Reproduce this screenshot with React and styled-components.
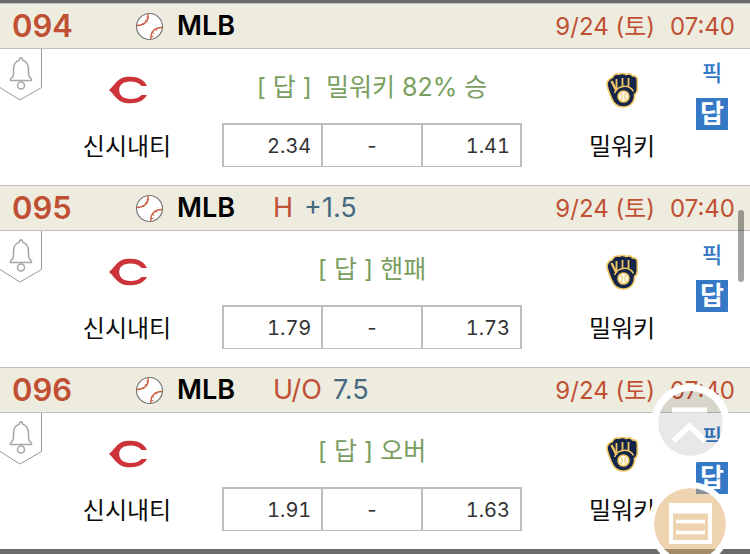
import React from "react";
import styled, { createGlobalStyle } from "styled-components";

const Global = createGlobalStyle`
  *, *::before, *::after { box-sizing: border-box; }
  body {
    margin: 0;
    background: #fff;
    color: #0c0c0c;
    font-family: Inter, "Noto Sans CJK KR", sans-serif;
  }
`;

const List = styled.main`
  border-top: 3px solid #6b6b6b;
  border-bottom: 5px solid #6b6b6b;
`;

const Game = styled.article`
  display: flex;
  flex-direction: column;
`;

const GameHeader = styled.header`
  display: flex;
  align-items: center;
  height: 46px;
  padding: 0 15px 0 12px;
  background: #eeecdf;
  border-top: 1px solid #bebebe;
  border-bottom: 1px solid #bebebe;
  white-space: nowrap;
`;

const GameNumber = styled.span`
  width: 123px;
  font-size: 31px;
  line-height: 44px;
  font-weight: 600;
  color: #c05033;
`;

const League = styled.h2`
  display: flex;
  align-items: center;
  gap: 13px;
  margin: 0;
  font-size: 27px;
  line-height: 46px;
  font-weight: 600;
  color: #000;
`;

const Line = styled.span`
  display: flex;
  gap: 11px;
  margin-left: 38px;
  font-size: 27px;
  line-height: 46px;
  color: #c05033;
`;

const LineValue = styled.span`
  color: #45697f;
`;

const Kickoff = styled.time`
  display: flex;
  gap: 15px;
  margin-left: auto;
  font-size: 24px;
  line-height: 46px;
  padding-top: 2px;
  color: #c05033;
`;

const GameBody = styled.div`
  display: grid;
  grid-template-columns: 42px 170fr 336px 148fr 54px;
  height: 136px;
`;

const AlarmButton = styled.button`
  align-self: start;
  width: 42px;
  height: 52px;
  padding: 0;
  border: 0;
  background: none;

  svg { display: block; }
`;

const Team = styled.div`
  display: flex;
  flex-direction: column;
  align-items: center;
  gap: 20px;
  padding-top: 22px;
  font-size: 24px;
  line-height: 36px;
  white-space: nowrap;
`;

const Middle = styled.div`
  display: flex;
  flex-direction: column;
  gap: 18px;
  padding: 20px 26px 0 10px;
`;

const Answer = styled.p`
  margin: 0;
  font-size: 25px;
  line-height: 36px;
  text-align: center;
  white-space: pre;
  color: #7a9e60;
`;

const Odds = styled.table`
  width: 100%;
  height: 44px;
  table-layout: fixed;
  border-collapse: collapse;
  border: 2px solid #bdbdbd;
  border-bottom-width: 1px;
`;

const Odd = styled.td`
  padding: 0 10px;
  border-left: 2px solid #bdbdbd;
  font-size: 20px;
  line-height: 24px;
  font-variant-numeric: tabular-nums;
  text-align: ${(p) => (p.$center ? "center" : "right")};
  color: #333;
`;

const Picks = styled.div`
  display: flex;
  flex-direction: column;
  align-items: flex-start;
  gap: 9px;
  padding-top: 8px;
`;

const PickButton = styled.button`
  width: 32px;
  height: 32px;
  padding: 0;
  border: 0;
  font-family: inherit;
  font-size: ${(p) => (p.$filled ? "26px" : "22px")};
  line-height: 32px;
  font-weight: ${(p) => (p.$filled ? 700 : 500)};
  color: ${(p) => (p.$filled ? "#fff" : "#3478c6")};
  background: ${(p) => (p.$filled ? "#3478c6" : "none")};
`;

const FloatingActions = styled.nav`
  position: fixed;
  right: 18px;
  bottom: -12px;
  display: flex;
  flex-direction: column;
  align-items: center;
  gap: 19px;
`;

const RoundButton = styled.button`
  display: grid;
  place-items: center;
  width: ${(p) => p.$size}px;
  height: ${(p) => p.$size}px;
  padding: 0;
  border: ${(p) => p.$ring}px solid #fff;
  border-radius: 50%;
  background: ${(p) => p.$fill};
  background-clip: padding-box;
`;

const ScrollThumb = styled.div`
  position: fixed;
  top: 210px;
  right: 6px;
  width: 6px;
  height: 72px;
  border-radius: 3px;
  background: rgba(0, 0, 0, 0.36);
`;

const Baseball = () => (
  <svg width="29" height="29" viewBox="0 0 29 29" fill="none" aria-hidden="true">
    <circle cx="14.5" cy="14.5" r="13" fill="#fff" stroke="#777" strokeWidth="1.2" />
    <g stroke="#cb5a3c" strokeWidth="1.4">
      <path d="M13 2c1 6-3 11.500-11.200 11.500" />
      <path d="M16 27c-.8-6 3-11.500 11.200-11.500" />
      <path d="M11.500 5l2.500 .8M10 8.500l2.500 1.500M7.500 11l1.500 2M16 24l2.500 .8M17 20l2.200 1.500M20.500 16.500l1.500 2.200" strokeWidth="1" />
    </g>
  </svg>
);

const Bell = () => (
  <svg width="42" height="52" viewBox="0 0 42 52" fill="none" aria-hidden="true">
    <path d="M41.500 0V38.500L20 51L0 38.500" stroke="#999" />
    <path
      d="M21 8.800c-1 0-1.500 1.200-1.500 2.300c-4.300 1.300-6 5-6 9.400v4.500c0 2-1 3.500-3 5v1.500h21V30c-2-1.500-3-3-3-5v-4.500c0-4.400-1.700-8.100-6-9.400c0-1.100-.5-2.300-1.500-2.300z"
      stroke="#a6a6a6"
      strokeWidth="1.500"
      strokeLinejoin="round"
    />
    <circle cx="21" cy="36.500" r="3.500" stroke="#a6a6a6" strokeWidth="1.500" />
  </svg>
);

const RedsLogo = () => (
  <svg width="40" height="38" viewBox="0 0 40 38" aria-hidden="true">
    <path
      d="M2 19C6 15.500 9 10.500 13 8C16.500 5.800 20 5.800 24 5.800C31 5.800 37 8.500 40 15H34.500C31.500 11.500 28 10.500 23.500 10.500C16 10.500 12.200 14 12.200 19S16 28 23.500 28C28 28 31.500 27 34.500 24H40C37 29.500 31 32.200 24 32.200C20 32.200 16.500 32.200 13 30C9 27.500 6 22.500 2 19Z"
      fill="#cd3439"
    />
  </svg>
);

const BrewersLogo = () => (
  <svg width="40" height="38" viewBox="0 0 40 38" aria-hidden="true">
    <path
      d="M5 12.500C5.500 9.500 8 7.500 10.500 6.500C11.500 4 14 2.500 17 3.200C19.500 2.200 22 2.200 24 3.500C27 2.500 29.500 3 30.500 5C33.500 4.500 35.500 6.500 35.300 9.500V18C35.200 20.500 34.500 22.500 32.500 23.500C33 31 28 36 21.500 36C15 36 11.500 32 9.800 27.500C8 23 5 17 5 12.500Z"
      fill="#152548"
      stroke="#f0c663"
      strokeWidth="1.600"
    />
    <g fill="none" stroke="#f0c663">
      <path d="M9.500 10C11 13 13 17 14.500 20" strokeWidth="2.400" />
      <path d="M14.500 8V18M20.500 7V15M26.500 7V15.500" strokeWidth="1.800" />
      <path d="M12.500 22C15 14.500 27 12.500 31.500 20.500" strokeWidth="1.500" />
    </g>
    <circle cx="21.500" cy="25.500" r="5.500" fill="#fffbea" stroke="#f0c663" strokeWidth="1.600" />
    <path d="M19 22C20.500 24 20.500 27 19 29M24 22C22.500 24 22.500 27 24 29" fill="none" stroke="#e8bd5a" />
  </svg>
);

const ToTopIcon = () => (
  <svg width="40" height="40" viewBox="0 0 40 40" fill="none" stroke="#fff" aria-hidden="true">
    <path d="M2 6H37" strokeWidth="5" />
    <path d="M3.500 37L19.500 22L35.500 37" strokeWidth="5.500" />
  </svg>
);

const ListIcon = () => (
  <svg width="44" height="42" viewBox="0 0 44 42" fill="none" stroke="#fff" aria-hidden="true">
    <path d="M3 2H42V39H3Z" strokeWidth="4" />
    <path d="M3 6.500H42" strokeWidth="8" />
    <path d="M8 18.500H37M8 29.500H37" strokeWidth="3.500" />
  </svg>
);

const games = [
  { number: "094", answer: "[ 답 ]  밀워키 82% 승", home: "2.34", away: "1.41" },
  { number: "095", line: "H", value: "+1.5", answer: "[ 답 ] 핸패", home: "1.79", away: "1.73" },
  { number: "096", line: "U/O", value: "7.5", answer: "[ 답 ] 오버", home: "1.91", away: "1.63" },
];

const GameRow = ({ game }) => (
  <Game>
    <GameHeader>
      <GameNumber>{game.number}</GameNumber>
      <League>
        <Baseball />
        MLB
      </League>
      {game.line && (
        <Line>
          {game.line}
          <LineValue>{game.value}</LineValue>
        </Line>
      )}
      <Kickoff>
        <span>9/24 (토)</span>
        <span>07:40</span>
      </Kickoff>
    </GameHeader>
    <GameBody>
      <AlarmButton type="button" aria-label="알림">
        <Bell />
      </AlarmButton>
      <Team>
        <RedsLogo />
        신시내티
      </Team>
      <Middle>
        <Answer>{game.answer}</Answer>
        <Odds>
          <tbody>
            <tr>
              <Odd>{game.home}</Odd>
              <Odd $center>-</Odd>
              <Odd>{game.away}</Odd>
            </tr>
          </tbody>
        </Odds>
      </Middle>
      <Team>
        <BrewersLogo />
        밀워키
      </Team>
      <Picks>
        <PickButton type="button">픽</PickButton>
        <PickButton type="button" $filled>답</PickButton>
      </Picks>
    </GameBody>
  </Game>
);

export default function App() {
  return (
    <>
      <Global />
      <List>
        {games.map((game) => (
          <GameRow key={game.number} game={game} />
        ))}
      </List>
      <ScrollThumb />
      <FloatingActions>
        <RoundButton type="button" aria-label="맨 위로" $size={79} $ring={7} $fill="rgba(0, 0, 0, 0.09)">
          <ToTopIcon />
        </RoundButton>
        <RoundButton type="button" aria-label="목록" $size={84} $ring={6} $fill="rgba(221, 169, 102, 0.51)">
          <ListIcon />
        </RoundButton>
      </FloatingActions>
    </>
  );
}
